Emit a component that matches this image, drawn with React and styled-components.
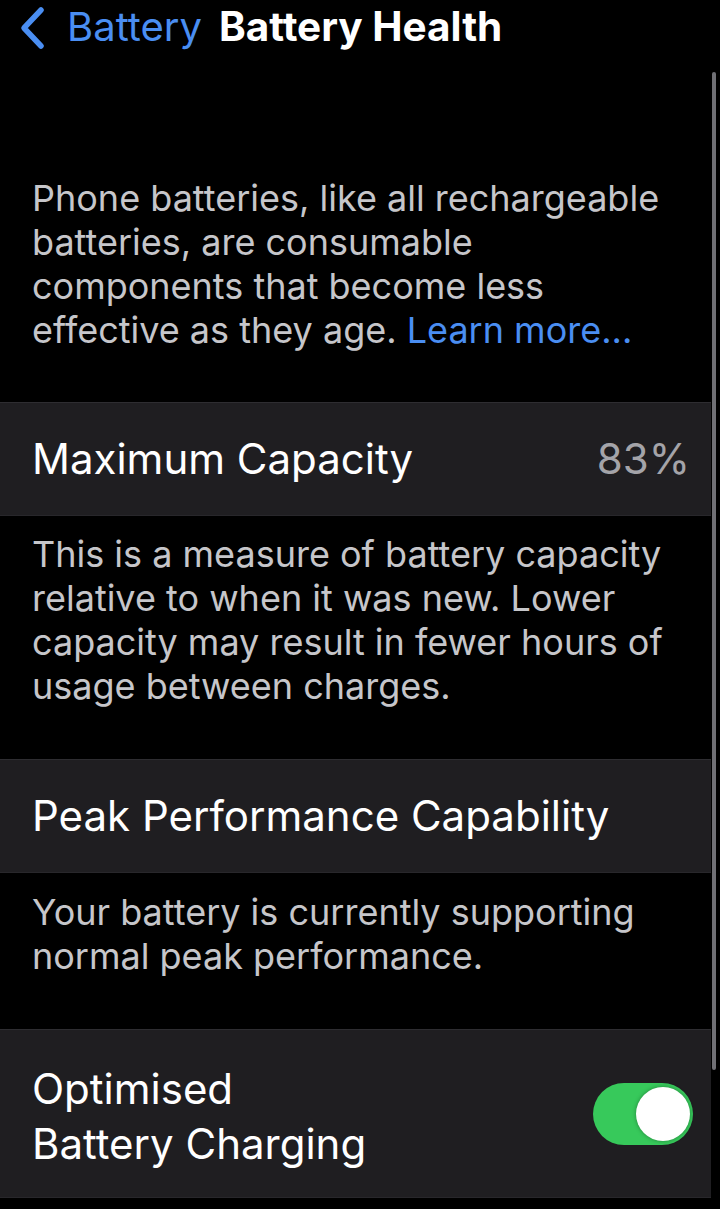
import React from "react";
import styled, { createGlobalStyle } from "styled-components";

const GlobalStyle = createGlobalStyle`
  html, body {
    margin: 0;
    padding: 0;
    background: #000;
  }
  body {
    font-family: Inter, "Noto Sans", "Liberation Sans", sans-serif;
    -webkit-font-smoothing: antialiased;
  }
`;

const Screen = styled.div`
  position: relative;
  width: 720px;
  height: 1209px;
  background: #000;
  overflow: hidden;
`;

const Content = styled.div`
  width: 711px;
  display: flex;
  flex-direction: column;
`;

const NavBar = styled.div`
  height: 56px;
  display: flex;
  align-items: flex-start;
  padding-left: 17px;
  box-sizing: border-box;
`;

const BackChevron = styled.svg`
  width: 30px;
  height: 44px;
  margin-top: 6px;
  flex: none;
`;

const BackLabel = styled.span`
  margin-left: 20px;
  font-size: 40px;
  line-height: 54px;
  color: #4a8ef2;
`;

const Title = styled.span`
  margin-left: 17px;
  font-size: 40.5px;
  line-height: 54px;
  font-weight: 700;
  color: #fff;
`;

const Footnote = styled.p`
  margin: 0;
  padding: ${(p) => p.$pad};
  font-size: 36px;
  line-height: 44px;
  color: #c6c6ca;
`;

const Link = styled.span`
  color: #4a8ef2;
`;

const Cell = styled.div`
  display: flex;
  align-items: ${(p) => (p.$top ? "flex-start" : "center")};
  justify-content: space-between;
  box-sizing: border-box;
  height: ${(p) => p.$h}px;
  padding: ${(p) => p.$pad};
  background: #1f1e21;
  border-top: 1px solid #2e2d31;
  border-bottom: 1px solid #28272b;
`;

const CellLabel = styled.div`
  font-size: 42px;
  line-height: ${(p) => p.$lh || 50}px;
  color: #fff;
`;

const CellValue = styled.div`
  font-size: 42px;
  line-height: 50px;
  color: #a4a4a9;
`;

const Toggle = styled.div`
  position: relative;
  width: 100px;
  height: 62px;
  border-radius: 31px;
  background: #37c95b;
  flex: none;
  margin-top: 22px;
`;

const Knob = styled.div`
  position: absolute;
  top: 4px;
  right: 3px;
  width: 54px;
  height: 54px;
  border-radius: 50%;
  background: #fff;
  box-shadow: 0 0 4px rgba(0, 0, 0, 0.35);
`;

const ScrollIndicator = styled.div`
  position: absolute;
  top: 72px;
  right: 4px;
  width: 4px;
  height: 998px;
  border-radius: 2px;
  background: rgba(150, 150, 156, 0.75);
`;

export default function App() {
  return (
    <>
      <GlobalStyle />
      <Screen>
        <Content>
          <NavBar>
            <BackChevron viewBox="0 0 30 44">
              <polyline
                points="24,4 7,22 24,40"
                fill="none"
                stroke="#4a8ef2"
                strokeWidth="5.5"
                strokeLinecap="round"
                strokeLinejoin="round"
              />
            </BackChevron>
            <BackLabel>Battery</BackLabel>
            <Title>Battery Health</Title>
          </NavBar>

          <Footnote $pad="120px 12px 50px 32px">
            Phone batteries, like all rechargeable
            <br />
            batteries, are consumable
            <br />
            components that become less
            <br />
            effective as they age. <Link>Learn more...</Link>
          </Footnote>

          <Cell $h={114} $pad="0 21px 0 32px">
            <CellLabel>Maximum Capacity</CellLabel>
            <CellValue>83%</CellValue>
          </Cell>

          <Footnote $pad="16px 12px 51px 32px">
            This is a measure of battery capacity
            <br />
            relative to when it was new. Lower
            <br />
            capacity may result in fewer hours of
            <br />
            usage between charges.
          </Footnote>

          <Cell $h={114} $pad="0 21px 0 32px">
            <CellLabel>Peak Performance Capability</CellLabel>
          </Cell>

          <Footnote $pad="17px 12px 51px 32px">
            Your battery is currently supporting
            <br />
            normal peak performance.
          </Footnote>

          <Cell $h={169} $top $pad="31px 18px 0 32px">
            <CellLabel $lh={55}>
              Optimised
              <br />
              Battery Charging
            </CellLabel>
            <Toggle>
              <Knob />
            </Toggle>
          </Cell>
        </Content>
        <ScrollIndicator />
      </Screen>
    </>
  );
}
